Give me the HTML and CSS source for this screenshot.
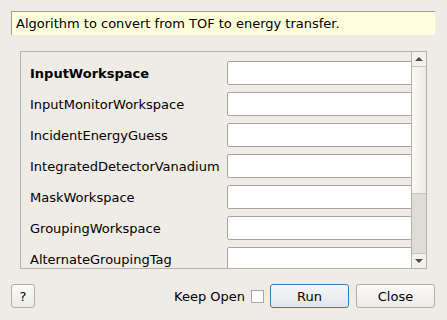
FILE: index.html
```html
<!DOCTYPE html>
<html>

<head>
  <meta charset="utf-8">
  <title>ConvertToEnergy</title>
  <link rel="stylesheet" href="styles.css">
</head>

<body>
  <div class="dialog">
    <div class="description">Algorithm to convert from TOF to energy transfer.</div>

    <div class="scroll-area">
      <div class="props">
        <div class="row">
          <label class="mandatory">InputWorkspace</label>
          <input type="text">
        </div>
        <div class="row">
          <label>InputMonitorWorkspace</label>
          <input type="text">
        </div>
        <div class="row">
          <label>IncidentEnergyGuess</label>
          <input type="text">
        </div>
        <div class="row">
          <label>IntegratedDetectorVanadium</label>
          <input type="text">
        </div>
        <div class="row">
          <label>MaskWorkspace</label>
          <input type="text">
        </div>
        <div class="row">
          <label>GroupingWorkspace</label>
          <input type="text">
        </div>
        <div class="row">
          <label>AlternateGroupingTag</label>
          <input type="text">
        </div>
      </div>
      <div class="scrollbar">
        <div class="arrow up"></div>
        <div class="handle"></div>
        <div class="track"></div>
        <div class="arrow down"></div>
      </div>
    </div>

    <div class="buttons">
      <button class="btn help">?</button>
      <div class="spacer"></div>
      <label class="keep-open">Keep Open <span class="checkbox"></span></label>
      <button class="btn run">Run</button>
      <button class="btn">Close</button>
    </div>
  </div>
</body>

</html>
```

FILE: styles.css
```css
/* Reset */
body {
  margin: 0;
  padding: 0;
  background-color: #efebe7;
  font-family: "DejaVu Sans", sans-serif;
  font-size: 13px;
  color: #000000;
}

.dialog {
  width: 447px;
  height: 320px;
  padding: 11px 12px 0 11px;
  box-sizing: border-box;
}

/* Yellow description box */
.description {
  height: 24px;
  background-color: #ffffdc;
  border-top: 1px solid #a09d99;
  border-left: 1px solid #a09d99;
  box-sizing: border-box;
  padding-left: 4px;
  line-height: 23px;
}

/* Property list */
.scroll-area {
  display: flex;
  margin: 16px 8px 0 9px;
  height: 218px;
  border: 1px solid #b5b2ae;
  box-sizing: border-box;
  overflow: hidden;
}

.props {
  flex: 1;
  overflow: hidden;
  display: flex;
  flex-direction: column;
  gap: 7px;
  padding: 9px 0 0 9px;
}

.row {
  display: flex;
  align-items: center;
  height: 24px;
  flex-shrink: 0;
}

.row label {
  width: 197px;
  flex-shrink: 0;
}

.row label.mandatory {
  font-weight: bold;
}

.row input {
  flex: 1;
  height: 24px;
  margin: 0 -3px 0 0;
  padding: 0;
  border: 1px solid #a8a5a1;
  border-radius: 2px;
  background-color: #ffffff;
  box-sizing: border-box;
}

/* Vertical scrollbar */
.scrollbar {
  width: 14px;
  flex-shrink: 0;
  display: flex;
  flex-direction: column;
  border-left: 1px solid #b5b2ae;
}

.arrow {
  height: 14px;
  display: flex;
  align-items: center;
  justify-content: center;
  background-color: #f3f1ee;
}

.arrow.up {
  border-bottom: 1px solid #c8c5c1;
}

.arrow.up::after,
.arrow.down::after {
  content: "";
  border-left: 4px solid transparent;
  border-right: 4px solid transparent;
}

.arrow.up::after {
  border-bottom: 4px solid #4a4a4a;
}

.arrow.down::after {
  border-top: 4px solid #4a4a4a;
}

.arrow.down {
  border-top: 1px solid #c8c5c1;
}

.handle {
  height: 126px;
  background: linear-gradient(to right, #fbfaf9, #ebe8e5);
}

.track {
  flex: 1;
  background-color: #dedcd9;
  border-top: 1px solid #c8c5c1;
}

/* Bottom button row */
.buttons {
  display: flex;
  align-items: center;
  margin-top: 15px;
  height: 24px;
}

.spacer {
  flex: 1;
}

.btn {
  height: 24px;
  width: 79px;
  font-family: "DejaVu Sans", sans-serif;
  font-size: 13px;
  color: #000000;
  border: 1px solid #b1aeaa;
  border-radius: 3px;
  background: linear-gradient(#fbfaf9, #edebe8);
  padding: 0;
}

.btn.help {
  width: 24px;
}

.btn.run {
  border-color: #3b7cb0;
  background: linear-gradient(#f5f6f7, #e3e6e9);
  margin-right: 7px;
}

.keep-open {
  display: flex;
  align-items: center;
  gap: 6px;
  margin-right: 6px;
}

.checkbox {
  width: 13px;
  height: 13px;
  background-color: #ffffff;
  border: 1px solid #a8a5a1;
  box-sizing: border-box;
}
```
